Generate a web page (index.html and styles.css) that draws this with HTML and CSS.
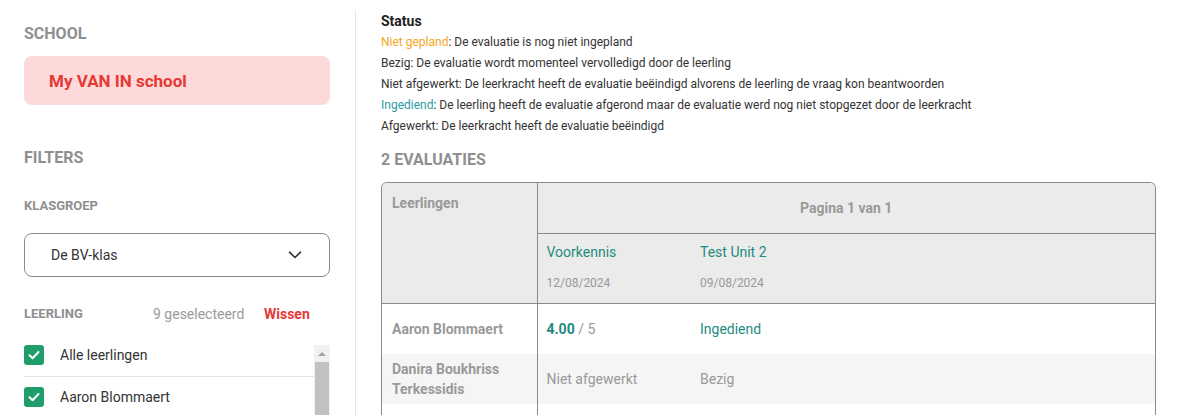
FILE: index.html
```html
<!DOCTYPE html>
<html lang="nl">
<head>
<meta charset="utf-8">
<title>Evaluaties</title>
<link rel="stylesheet" href="styles.css">
</head>
<body>
<div class="page">
  <aside class="sidebar">
    <h2 class="side-title">SCHOOL</h2>
    <div class="school-box">My VAN IN school</div>

    <h2 class="side-title filters">FILTERS</h2>
    <h3 class="sub-title klasgroep">KLASGROEP</h3>
    <div class="select">
      <span>De BV-klas</span>
      <svg class="chevron" width="14" height="8" viewBox="0 0 14 8"><path d="M1.5 1.2 L7 6.5 L12.5 1.2" fill="none" stroke="#333" stroke-width="1.6" stroke-linecap="round" stroke-linejoin="round"/></svg>
    </div>

    <div class="leerling-row">
      <h3 class="sub-title">LEERLING</h3>
      <span class="count">9 geselecteerd</span>
      <span class="wissen">Wissen</span>
    </div>

    <div class="list">
      <ul class="items">
        <li class="item">
          <span class="check"><svg width="20" height="20" viewBox="0 0 20 20"><path d="M5.5 10.3 L8.6 13.2 L14.5 7" fill="none" stroke="#fff" stroke-width="2" stroke-linecap="round" stroke-linejoin="round"/></svg></span>
          <span>Alle leerlingen</span>
        </li>
        <li class="item">
          <span class="check"><svg width="20" height="20" viewBox="0 0 20 20"><path d="M5.5 10.3 L8.6 13.2 L14.5 7" fill="none" stroke="#fff" stroke-width="2" stroke-linecap="round" stroke-linejoin="round"/></svg></span>
          <span>Aaron Blommaert</span>
        </li>
      </ul>
      <div class="scrollbar">
        <div class="arrow"></div>
        <div class="thumb"></div>
      </div>
    </div>
  </aside>

  <main class="main">
    <h2 class="status-title">Status</h2>
    <ul class="legend">
      <li><span class="orange">Niet gepland</span>: De evaluatie is nog niet ingepland</li>
      <li>Bezig: De evaluatie wordt momenteel vervolledigd door de leerling</li>
      <li>Niet afgewerkt: De leerkracht heeft de evaluatie beëindigd alvorens de leerling de vraag kon beantwoorden</li>
      <li><span class="cyan">Ingediend</span>: De leerling heeft de evaluatie afgerond maar de evaluatie werd nog niet stopgezet door de leerkracht</li>
      <li>Afgewerkt: De leerkracht heeft de evaluatie beëindigd</li>
    </ul>

    <h2 class="eval-title">2 EVALUATIES</h2>

    <div class="table-wrap">
      <table class="grid">
        <thead>
          <tr class="h1">
            <th class="name-col" rowspan="2">Leerlingen</th>
            <th class="pager" colspan="3">Pagina 1 van 1</th>
          </tr>
          <tr class="h2">
            <th class="eval"><div class="eval-name">Voorkennis</div><div class="eval-date">12/08/2024</div></th>
            <th class="eval"><div class="eval-name">Test Unit 2</div><div class="eval-date">09/08/2024</div></th>
            <th class="filler"></th>
          </tr>
        </thead>
        <tbody>
          <tr>
            <td class="name-col">Aaron Blommaert</td>
            <td class="cell"><b class="score">4.00</b> / 5</td>
            <td class="cell teal">Ingediend</td>
            <td class="filler"></td>
          </tr>
          <tr class="alt">
            <td class="name-col">Danira Boukhriss Terkessidis</td>
            <td class="cell">Niet afgewerkt</td>
            <td class="cell">Bezig</td>
            <td class="filler"></td>
          </tr>
          <tr class="last">
            <td class="name-col"></td>
            <td class="cell"></td>
            <td class="cell"></td>
            <td class="filler"></td>
          </tr>
        </tbody>
      </table>
    </div>
  </main>
</div>
</body>
</html>
```

FILE: styles.css
```css
* { box-sizing: border-box; }
html, body { margin: 0; padding: 0; }
body {
  font-family: Roboto, "Liberation Sans", Arial, sans-serif;
  color: #333;
  background: #fff;
  width: 1184px;
  height: 415px;
  overflow: hidden;
}
h2, h3, ul { margin: 0; padding: 0; }
ul { list-style: none; }

.page {
  display: flex;
  align-items: flex-start;
  height: 415px;
  overflow: hidden;
}

/* Sidebar */
.sidebar {
  width: 356px;
  flex: none;
  margin-top: 10px;
  height: 405px;
  border-right: 1px solid #e6e6e6;
  padding: 14px 25px 0 24px;
}
.side-title {
  font-size: 16px;
  line-height: 20px;
  font-weight: 700;
  color: #8f8f8f;
}
.school-box {
  margin-top: 12px;
  height: 49px;
  background: #fdd9d9;
  border-radius: 8px;
  display: flex;
  align-items: center;
  padding-left: 25px;
  font-size: 17px;
  font-weight: 700;
  color: #e53935;
}
.filters { margin-top: 43px; }
.sub-title {
  font-size: 13px;
  line-height: 16px;
  font-weight: 700;
  color: #8f8f8f;
}
.klasgroep { margin-top: 30px; }
.select {
  margin-top: 19px;
  height: 44px;
  border: 1px solid #8a8a8a;
  border-radius: 8px;
  display: flex;
  align-items: center;
  justify-content: space-between;
  padding: 0 27px 0 26px;
  font-size: 14px;
  color: #333;
}
.chevron { display: block; }

.leerling-row {
  margin-top: 27px;
  height: 20px;
  display: flex;
  align-items: center;
}
.leerling-row .sub-title { width: 129px; }
.count {
  font-size: 14px;
  color: #9a9a9a;
  width: 111px;
}
.wissen {
  font-size: 14px;
  font-weight: 700;
  color: #e53935;
}

.list {
  margin-top: 21px;
  display: flex;
  height: 80px;
}
.items { width: 290px; }
.item {
  display: flex;
  align-items: center;
  gap: 16px;
  padding: 10px 0 11px;
  border-bottom: 1px solid #e3e3e3;
  font-size: 14px;
  color: #333;
}
.item:first-child { padding-top: 0; }
.check {
  width: 20px;
  height: 20px;
  flex: none;
  border-radius: 3px;
  background: #1f9d6a;
  display: block;
}
.check svg { display: block; }
.scrollbar {
  width: 16px;
  background: #f1f1f1;
  display: flex;
  flex-direction: column;
}
.arrow {
  height: 17px;
  display: flex;
  align-items: center;
  justify-content: center;
}
.arrow::before {
  content: "";
  width: 0;
  height: 0;
  border-left: 4px solid transparent;
  border-right: 4px solid transparent;
  border-bottom: 4px solid #a3a3a3;
}
.thumb {
  flex: 1;
  margin: 0 1px;
  background: #c1c1c1;
}

/* Main */
.main {
  flex: 1;
  padding: 13px 28px 0 25px;
}
.status-title {
  font-size: 14px;
  line-height: 17px;
  font-weight: 700;
  color: #222;
}
.legend {
  margin-top: 2px;
  font-size: 12px;
  line-height: 21px;
  color: #333;
}
.orange { color: #f5a623; }
.cyan { color: #2a9ba3; }

.eval-title {
  margin-top: 13px;
  font-size: 16px;
  line-height: 20px;
  font-weight: 700;
  color: #8f8f8f;
}

.table-wrap {
  margin-top: 12px;
  border: 1px solid #8a8a8a;
  border-bottom: none;
  border-radius: 6px 6px 0 0;
  overflow: hidden;
}
.grid {
  width: 100%;
  border-collapse: collapse;
  font-size: 14px;
}
.grid th {
  font-weight: 700;
  text-align: left;
  background: #ebebeb;
  padding: 0;
}
.grid .name-col {
  width: 155px;
  border-right: 1px solid #8a8a8a;
  padding: 0 10px;
  color: #999;
  font-weight: 700;
  line-height: 20px;
}
.grid th.name-col {
  vertical-align: top;
  padding-top: 10px;
  border-bottom: 1px solid #8a8a8a;
}
.h1 { height: 50px; }
.grid th.pager {
  text-align: center;
  color: #999;
  border-bottom: 1px solid #8a8a8a;
}
.h2 { height: 70px; }
.grid th.eval {
  width: 154px;
  vertical-align: top;
  padding: 10px 9px 0;
  font-weight: 400;
  border-bottom: 1px solid #8a8a8a;
}
.grid th.filler { border-bottom: 1px solid #8a8a8a; }
.eval-name {
  color: #1e8c80;
  line-height: 17px;
}
.eval-date {
  margin-top: 15px;
  font-size: 12px;
  line-height: 15px;
  color: #999;
}

.grid tbody tr { height: 50px; }
.grid tbody tr:first-child { height: 51px; }
.grid tbody tr.alt td { background: #f5f5f5; }
.grid td.name-col { vertical-align: middle; }
.cell {
  padding: 0 9px;
  color: #999;
}
.score { color: #1e8c80; font-weight: 700; }
.teal { color: #1e8c80; }
```
